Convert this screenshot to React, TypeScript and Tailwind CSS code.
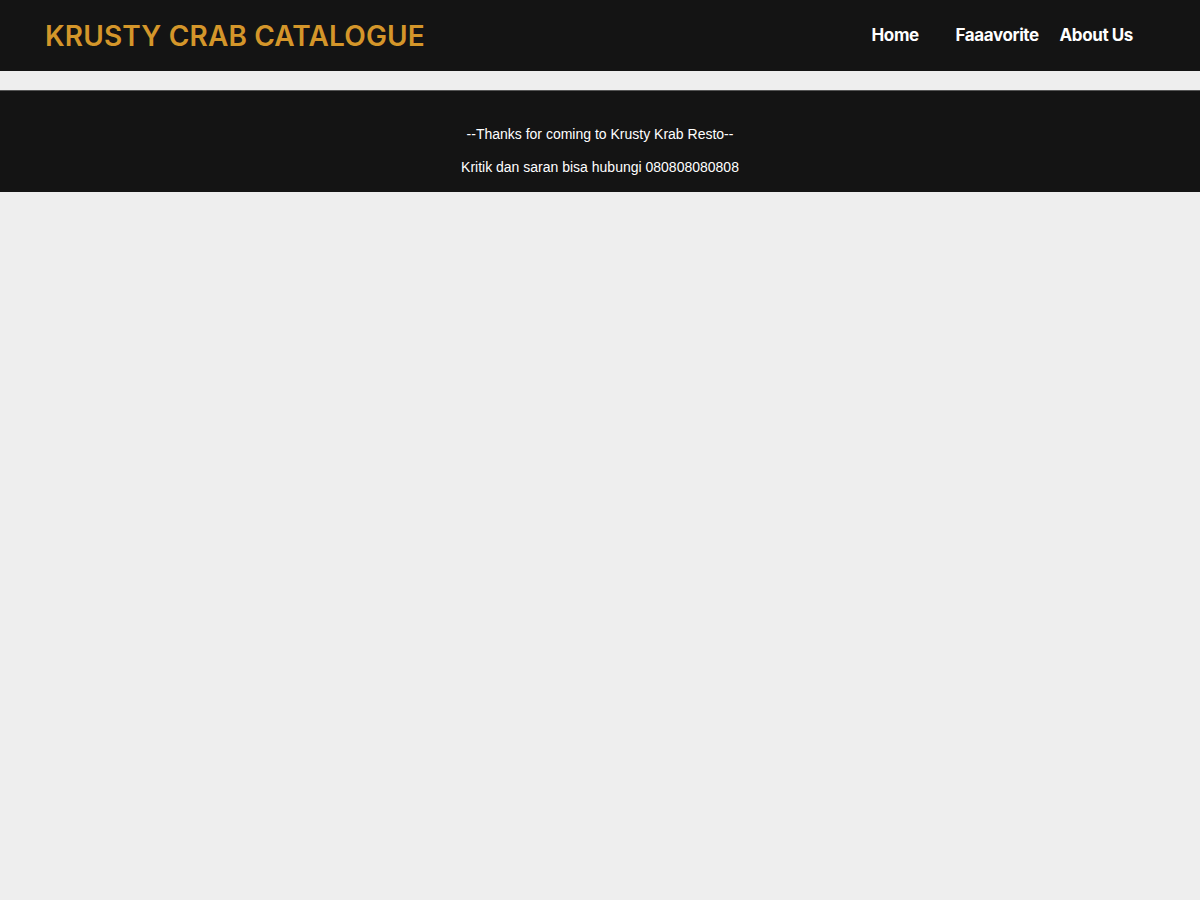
import React from 'react';

const navLinks = [
  { label: 'Home', className: 'w-[84px]' },
  { label: 'Faaavorite', className: 'w-[104px]' },
  { label: 'About Us', className: '' },
];

const App = () => {
  return (
    <div className="min-h-[900px] bg-[#eeeeee]">
      {/* Header */}
      <header className="h-[71px] bg-[#141414] flex items-center justify-between pl-[45px] pr-[67px]">
        <h1 className="text-[28px] font-semibold tracking-[0.15px] text-[#d4962a] font-['Inter',sans-serif] leading-none">
          KRUSTY CRAB CATALOGUE
        </h1>
        <nav className="flex items-center">
          {navLinks.map((link) => (
            <a
              key={link.label}
              href="#"
              className={`text-[17px] font-bold text-white tracking-[-0.4px] font-['Inter',sans-serif] ${link.className}`}
            >
              {link.label}
            </a>
          ))}
        </nav>
      </header>

      <main className="h-[19px]" />

      {/* Footer */}
      <footer className="border-t border-[#555555] bg-[#141414] h-[102px] flex flex-col items-center pt-[34px] gap-[15px] font-['Liberation_Sans',Arial,sans-serif] text-[14px] text-white leading-[18px]">
        <p>--Thanks for coming to Krusty Krab Resto--</p>
        <p>Kritik dan saran bisa hubungi 080808080808</p>
      </footer>
    </div>
  );
};

export default App;
